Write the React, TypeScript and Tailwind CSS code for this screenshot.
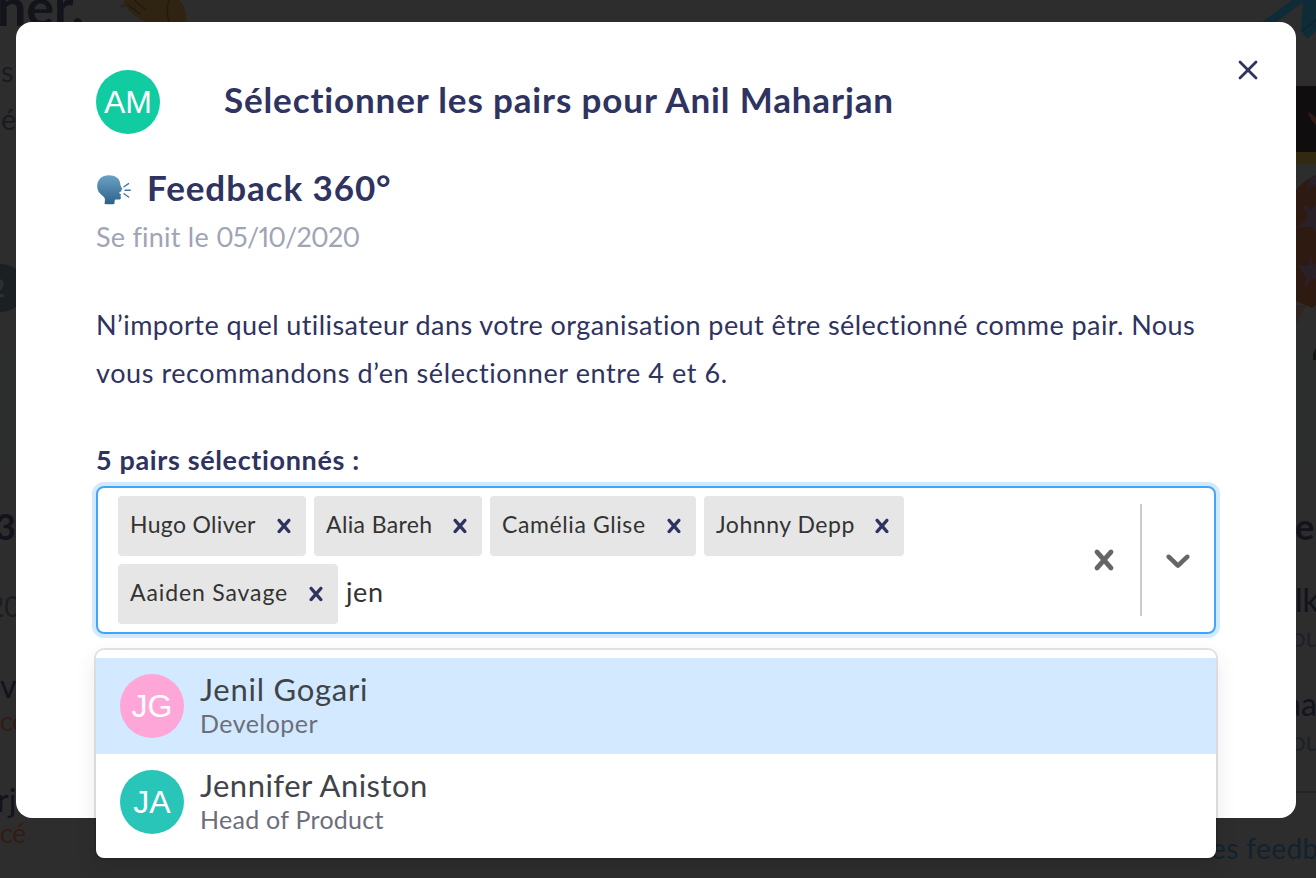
import React from 'react';

const CROSS =
  'M14.348 14.849c-0.469 0.469-1.229 0.469-1.697 0l-2.651-3.030-2.651 3.029c-0.469 0.469-1.229 0.469-1.697 0-0.469-0.469-0.469-1.229 0-1.697l2.758-3.15-2.759-3.152c-0.469-0.469-0.469-1.228 0-1.697s1.228-0.469 1.697 0l2.652 3.031 2.651-3.031c0.469-0.469 1.228-0.469 1.697 0s0.469 1.229 0 1.697l-2.758 3.152 2.758 3.15c0.469 0.469 0.469 1.229 0 1.698z';
const CHEVRON =
  'M4.516 7.548c0.436-0.446 1.043-0.481 1.576 0l3.908 3.747 3.908-3.747c0.533-0.481 1.141-0.446 1.574 0 0.436 0.445 0.408 1.197 0 1.615-0.406 0.418-4.695 4.502-4.695 4.502-0.217 0.223-0.502 0.335-0.787 0.335s-0.57-0.112-0.789-0.335c0 0-4.287-4.084-4.695-4.502s-0.436-1.17 0-1.615z';

const peers = [
  { name: 'Hugo Oliver', box: 'w-[188px] tracking-[0.33px]' },
  { name: 'Alia Bareh', box: 'w-[168px] tracking-[0.38px]' },
  { name: 'Camélia Glise', box: 'w-[206px] tracking-[0.6px]' },
  { name: 'Johnny Depp', box: 'w-[200px] tracking-[0.53px]' },
  { name: 'Aaiden Savage', box: 'w-[220px] tracking-[0.87px]' },
];

const options = [
  {
    initials: 'JG',
    name: 'Jenil Gogari',
    role: 'Developer',
    row: 'bg-[#d3e9ff]',
    avatar: 'bg-[#fea6d8]',
    nameSpacing: 'tracking-[0.76px]',
    roleSpacing: 'tracking-[0.45px]',
  },
  {
    initials: 'JA',
    name: 'Jennifer Aniston',
    role: 'Head of Product',
    row: 'bg-white',
    avatar: 'bg-[#2ac5b9]',
    nameSpacing: 'tracking-[0.48px]',
    roleSpacing: 'tracking-[0.27px]',
  },
];

function Icon({ d, className }: { d: string; className: string }) {
  return (
    <svg viewBox="0 0 20 20" className={`shrink-0 fill-current ${className}`} aria-hidden="true">
      <path d={d} />
    </svg>
  );
}

function Avatar({ initials, color }: { initials: string; color: string }) {
  return (
    <div
      className={`flex size-16 shrink-0 items-center justify-center rounded-full font-['Liberation_Sans',sans-serif] text-[32px] leading-none text-white ${color}`}
    >
      {initials}
    </div>
  );
}

function SpeakingHead() {
  return (
    <svg viewBox="0 0 34 30" className="h-[30px] w-[34px]" aria-hidden="true">
      <defs>
        <linearGradient id="head" x1="0" y1="0" x2="0" y2="1">
          <stop offset="0" stopColor="#6ba2c4" />
          <stop offset="1" stopColor="#2c628a" />
        </linearGradient>
      </defs>
      <path
        fill="url(#head)"
        d="M12 .3C4.6.3.2 4.900.2 11.200c0 4.400 2.500 7.500 5.600 9.700 1.800 1.300 2.300 2.300 2.100 4.300l-.3 3.700c3 .5 7 .5 9.800 0l.2-3c.2-1.200.9-1.500 2.100-1.400l2.200.1c1.500 0 2.100-.8 1.900-2.200l-.3-2 .7-.9-1.900-1.200.2-1.200 1.900-.7-.2-1.200 1-.9c.4-.5.2-.9-.3-1.400-1.300-1.400-1.500-2.700-1.700-4.600C22.600 3.300 18.300.3 12 .3z"
      />
      <g stroke="#3f7aa0" strokeWidth="1.4" strokeLinecap="round">
        <path d="M27 11.800l4.600-3.200M28 15.300h5.300M27 18.700l4.600 3.300" />
      </g>
    </svg>
  );
}

function Background() {
  return (
    <div className="absolute inset-0 flex justify-between overflow-hidden bg-[#2d2d2d] text-[#13131c]" aria-hidden="true">
      <div className="flex w-[190px] flex-col whitespace-nowrap">
        <div className="flex h-[50px] justify-between">
          <span className="-mt-[20px] -ml-[3px] text-[52px] leading-[52px] font-bold">ner.</span>
          <svg viewBox="0 0 70 24" className="h-6 w-[70px]">
            <path
              fill="#2f2411"
              d="M1 8c-1-3 2-5 4-4l-1-4h55c5 4 8 12 7 22l-2 2H29c-5-2-9-5-12-7-4-1-5-3-4-4-5-2-6-4-5-6-4 0-6 0-7 1z"
            />
            <path d="M8 5l12 9M14 0l12 10M49 0c-3 8-2 15 0 22" fill="none" stroke="#211a0e" strokeWidth="1.5" />
          </svg>
        </div>
        <span className="h-12 pl-px text-[29px] leading-[42px] text-[#1a1a22]">s</span>
        <span className="h-12 pl-px text-[29px] leading-[42px] text-[#1a1a22]">é</span>
        <div className="mt-[118px] -ml-[23px] flex size-12 items-center justify-center rounded-full bg-[#1b2022] pr-1.5 text-[24px] font-bold text-[#2d3134]">
          2
        </div>
        <div className="mt-[48px] h-24 bg-[#2b2e2c]" />
        <span className="mt-[46px] -ml-[5px] h-12 text-[36px] leading-12 font-bold">3</span>
        <span className="mt-[32px] -ml-[12px] h-12 text-[28px] leading-12 text-[#1c1c22]">20</span>
        <span className="mt-[32px] h-12 text-[32px] leading-12">v</span>
        <span className="-mt-[9px] h-10 text-[26px] leading-10 text-[#351a16]">cé</span>
        <span className="mt-[35px] -ml-[3px] h-12 text-[32px] leading-12">rj</span>
        <span className="-mt-[11px] h-10 text-[26px] leading-10 text-[#351a16]">cé</span>
      </div>
      <div className="flex w-[100px] flex-col whitespace-nowrap">
        <svg viewBox="0 0 100 360" className="h-[360px] w-[100px] shrink-0">
          <path fill="#0e2c38" d="M46 22L76 0h14L60 22zM87 0h13v31l-9 8-6-9z" />
          <path stroke="#13182f" strokeWidth="1" d="M86 31l14-11" />
          <path fill="#100d0f" d="M60 86h40v66H60z" />
          <path fill="#321a14" d="M92 112q4 1 8 6v7q-6-5-8-13z" />
          <path fill="#332911" d="M60 152h40v12H60z" />
          <path fill="#2f1a12" d="M80 190q8-10 20-15v130l-4 3-16-7z" />
          <path fill="#2a2028" d="M86 204l10 6 4-6v28l-4-5-15 1 11-11zM94 253l3 10 3 2v14l-5 1-7 9 2-12-9-12 12 1zM90 189l5-11 5-2v10z" />
          <path fill="#302520" d="M90 305l-10 18v-18z" />
          <path fill="#14120f" d="M100 348l-3 6v6h3z" />
        </svg>
        <div className="h-24 bg-[#2b2e2c]" />
        <span className="mt-[46px] h-12 pl-[79px] text-[36px] leading-12 font-bold">e</span>
        <span className="mt-[26px] h-12 pl-[79px] text-[32px] leading-12">lk</span>
        <span className="-mt-[7px] h-10 pl-[75px] text-[26px] leading-10 text-[#1c2228]">ou</span>
        <span className="mt-[23px] h-12 pl-[69px] text-[32px] leading-12">aa</span>
        <span className="-mt-[7px] h-10 pl-[75px] text-[26px] leading-10 text-[#1c2228]">ou</span>
        <div className="mt-[30px] h-0.5 shrink-0 border-t-2 border-[#242425]" />
        <span className="mt-[31px] -ml-[5px] h-12 text-[28px] leading-12 tracking-[0.4px] text-[#12222f]">es feedb</span>
      </div>
    </div>
  );
}

export default function App() {
  return (
    <div className="relative h-[878px] w-[1316px] overflow-hidden font-['Lato',sans-serif] text-[#2f3360]">
      <Background />
      <div className="relative px-4 pt-[22px] pr-5">
        <section className="flex h-[796px] flex-col rounded-2xl bg-white px-20 pt-12" role="dialog">
          <header className="flex h-16 shrink-0">
            <Avatar initials="AM" color="bg-[#11cba1]" />
            <h1 className="ml-16 grow text-[35px] leading-[59px] font-bold tracking-[0.86px] whitespace-nowrap">
              Sélectionner les pairs pour Anil Maharjan
            </h1>
            <button className="-mt-2.5 -mr-[42px] flex size-5 items-center justify-center" aria-label="Fermer">
              <svg viewBox="0 0 20 20" className="size-5 shrink-0" fill="none" stroke="currentColor" strokeWidth="2.8" strokeLinecap="round">
                <path d="M2 2l16 16M18 2L2 18" />
              </svg>
            </button>
          </header>

          <div className="mt-[29px] flex h-12 shrink-0 items-center">
            <span className="mt-[5px] ml-px w-[50px]">
              <SpeakingHead />
            </span>
            <h2 className="text-[35px] leading-12 font-bold tracking-[0.92px]">Feedback 360°</h2>
          </div>
          <p className="mt-[6px] h-10 shrink-0 text-[27px] leading-10 tracking-[0.22px] proportional-nums text-[#a0a4b5]">
            Se finit le <span className="tracking-[-0.75px]">05/10/2020</span>
          </p>

          <p className="mt-[44px] shrink-0 text-[27px] leading-12 whitespace-nowrap">
            <span className="tracking-[0.43px]">
              N’importe quel utilisateur dans votre organisation peut être sélectionné comme pair. Nous
            </span>
            <br />
            <span className="tracking-[0.58px]">vous recommandons d’en sélectionner entre 4 et 6.</span>
          </p>

          <h3 className="mt-[43px] h-10 shrink-0 text-[27px] leading-10 font-bold tracking-[0.64px]">5 pairs sélectionnés :</h3>

          <div className="relative mt-1.5 shrink-0">
            <div className="flex h-[148px] items-center rounded-lg border-2 border-[#42a6f8] bg-white shadow-[0_0_0_4px_#d3e9ff]">
              <div className="flex grow flex-wrap gap-2 pl-5">
                {peers.map((peer) => (
                  <div
                    key={peer.name}
                    className={`flex h-[60px] items-center justify-between rounded bg-[#e6e6e6] pr-2 pl-3 text-[23px] text-[#333333] ${peer.box}`}
                  >
                    <span className="pb-1 leading-7 whitespace-nowrap">{peer.name}</span>
                    <Icon d={CROSS} className="size-7 text-[#2f3360]" />
                  </div>
                ))}
                <span className="flex h-[60px] items-center pb-[3px] text-[27px] tracking-[0.6px] text-[#333333]">jen</span>
              </div>
              <div className="flex h-28 shrink-0 items-center text-[#666666]">
                <Icon d={CROSS} className="mr-4 size-10" />
                <span className="h-full w-0.5 bg-[#cccccc]" />
                <Icon d={CHEVRON} className="mx-4 size-10" />
              </div>
            </div>

            <div className="absolute inset-x-0 top-[164px] rounded-lg bg-white py-2 shadow-[0_0_0_2px_rgba(0,0,0,0.1),0_8px_22px_rgba(0,0,0,0.1)]" role="listbox">
              {options.map((option) => (
                <div key={option.name} className={`flex h-24 items-center gap-4 px-6 ${option.row}`} role="option">
                  <Avatar initials={option.initials} color={option.avatar} />
                  <div className="-mt-1.5 flex flex-col whitespace-nowrap">
                    <span className={`text-[31px] leading-10 text-[#404448] ${option.nameSpacing}`}>{option.name}</span>
                    <span className={`text-[25px] leading-7 text-[#6c6f7b] ${option.roleSpacing}`}>{option.role}</span>
                  </div>
                </div>
              ))}
            </div>
          </div>
        </section>
      </div>
    </div>
  );
}
